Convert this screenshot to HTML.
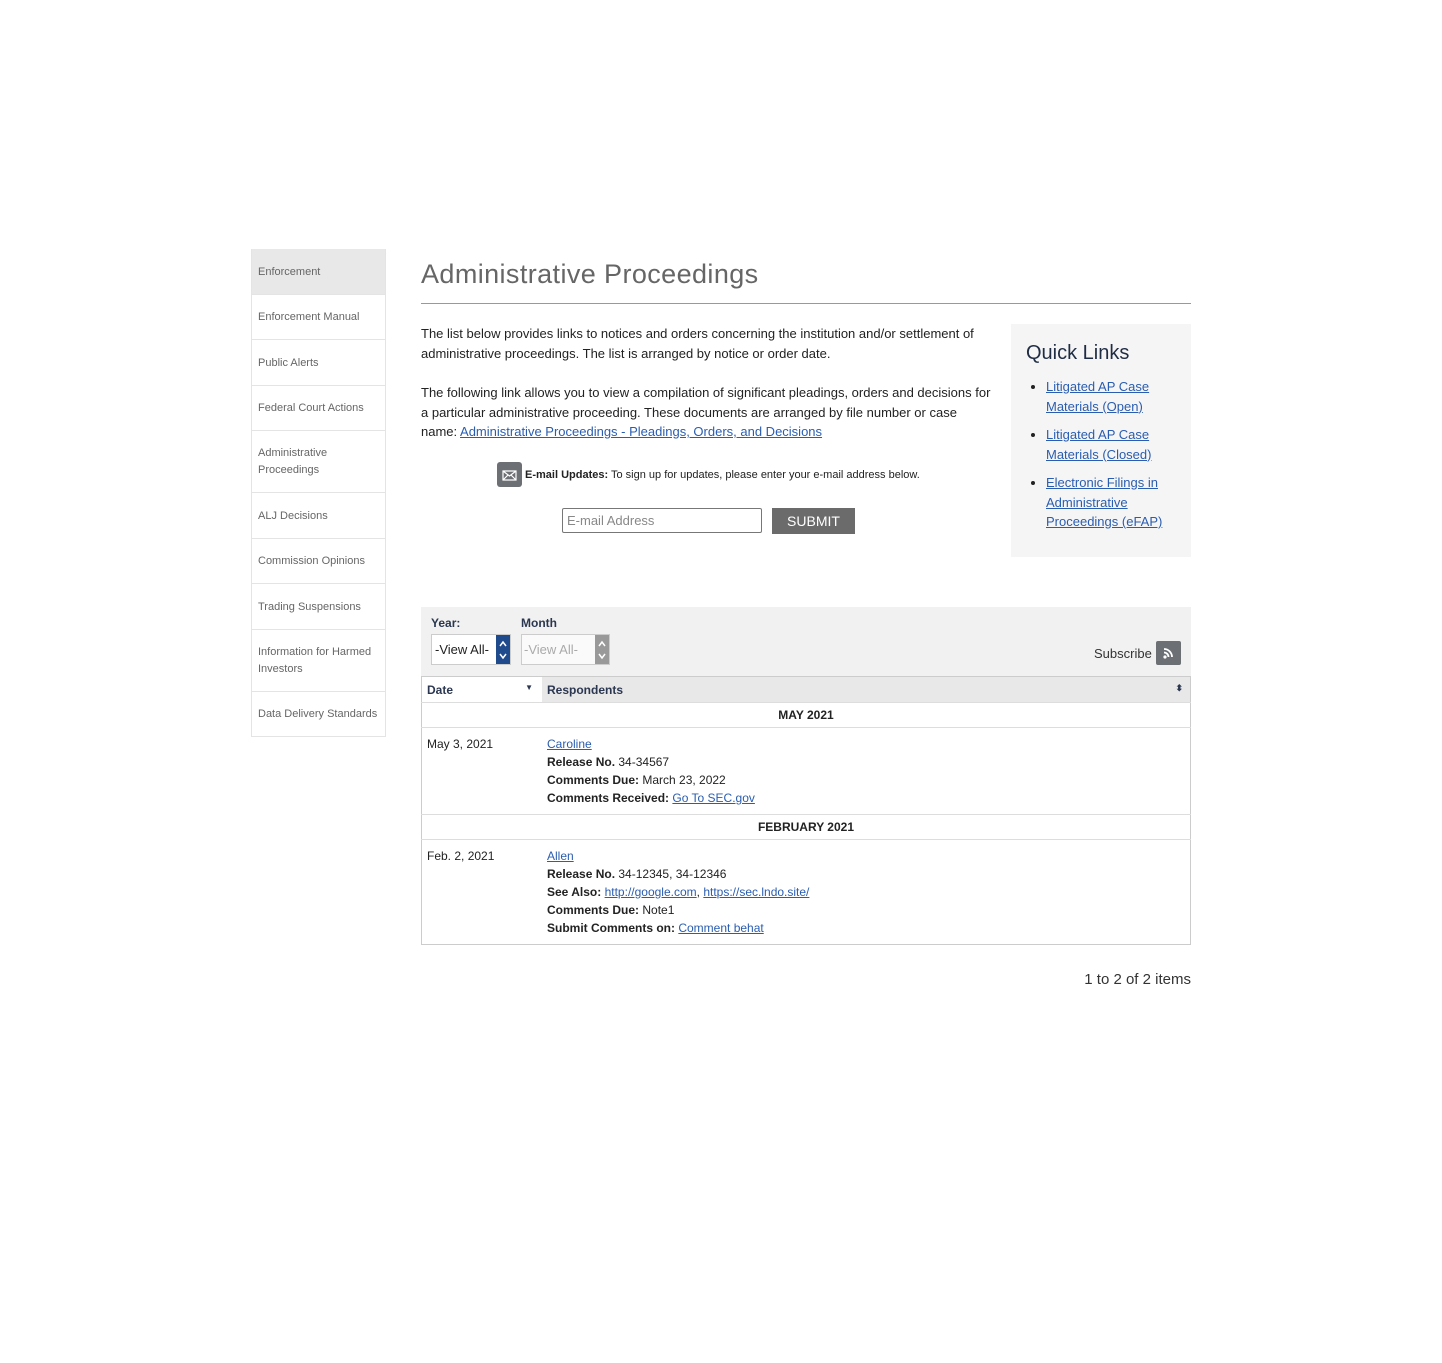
<!DOCTYPE html>
<html><head><style>
body{margin:0;background:#fff;font-family:"Liberation Sans",Arial,sans-serif;color:#222;}
.side{position:absolute;left:251px;top:249px;width:133px;border:1px solid #e4e4e4;border-top:none;}
.side div{font-size:11px;color:#666;padding:0 6px;border-top:1px solid #e4e4e4;display:flex;align-items:center;line-height:17px;box-sizing:border-box;padding-top:1px;}
.side div.act{background:#e8e8e8;border-top:none;}
a{color:#2a5db0;text-decoration:underline;}
h1{position:absolute;left:421px;top:259px;margin:0;font-size:27px;font-weight:normal;color:#666;letter-spacing:.4px;}
.hr{position:absolute;left:421px;top:303px;width:770px;border-top:1px solid #999;}
.intro{position:absolute;left:421px;top:324px;width:575px;font-size:13px;line-height:19.5px;}
.intro p{margin:0 0 20px;}
.ql{position:absolute;left:1011px;top:324px;width:180px;height:233px;background:#f5f5f5;}
.ql h2{margin:18px 0 0 15px;font-size:20px;font-weight:normal;color:#1f2d44;}
.ql ul{margin:12px 0 0;padding-left:35px;font-size:13px;line-height:19.5px;}
.ql li{margin-bottom:9px;}
.filt{position:absolute;left:421px;top:607px;width:770px;height:69px;background:#f1f1f1;}
.lab{position:absolute;font-size:12px;font-weight:bold;color:#2b3750;}
.sel{position:absolute;top:27px;height:31px;border:1px solid #ccc;background:#fff;font-size:13px;line-height:30px;box-sizing:border-box;}
.sel span{position:absolute;right:0;top:0;bottom:0;width:14px;}
table{position:absolute;left:421px;top:676px;width:770px;border-collapse:collapse;font-size:12px;border:1px solid #ccc;}
th{text-align:left;height:25px;padding:0 5px;color:#2b3750;font-size:12px;}
td{vertical-align:top;padding:7px 5px 7px;line-height:18px;}
.mo td{text-align:center;font-weight:bold;padding:0;height:24px;line-height:24px;border-top:1px solid #ddd;border-bottom:1px solid #ddd;}
</style></head><body>
<div class="side">
<div class="act" style="height:45px">Enforcement</div>
<div style="height:45px">Enforcement Manual</div>
<div style="height:46px">Public Alerts</div>
<div style="height:45px">Federal Court Actions</div>
<div style="height:62px">Administrative Proceedings</div>
<div style="height:46px">ALJ Decisions</div>
<div style="height:45px">Commission Opinions</div>
<div style="height:46px">Trading Suspensions</div>
<div style="height:62px">Information for Harmed Investors</div>
<div style="height:45px">Data Delivery Standards</div>
</div>
<h1>Administrative Proceedings</h1>
<div class="hr"></div>
<div class="intro">
<p>The list below provides links to notices and orders concerning the institution and/or settlement of administrative proceedings. The list is arranged by notice or order date.</p>
<p>The following link allows you to view a compilation of significant pleadings, orders and decisions for a particular administrative proceeding. These documents are arranged by file number or case name: <a href="#">Administrative Proceedings - Pleadings, Orders, and Decisions</a></p>
</div>
<div style="position:absolute;left:497px;top:462px;width:25px;height:25px;background:#6c6f73;border-radius:3px;"><svg width="25" height="25" viewBox="0 0 25 25"><path d="M6 9h13v9H6z M6 9l6.5 5L19 9 M6 18l5-5 M19 18l-5-5" fill="none" stroke="#fff" stroke-width="1.2"/></svg></div>
<div style="position:absolute;left:525px;top:469px;font-size:11px"><b>E-mail Updates:</b> To sign up for updates, please enter your e-mail address below.</div>
<div style="position:absolute;left:562px;top:508px;height:25px;width:200px;border:1px solid #777;border-radius:2px;font-size:13px;color:#888;line-height:24px;padding-left:4px;box-sizing:border-box">E-mail Address</div>
<div style="position:absolute;left:772px;top:508px;width:83px;height:26px;background:#6b6b6b;color:#fff;font-size:14px;text-align:center;line-height:26px">SUBMIT</div>
<div class="ql"><h2>Quick Links</h2><ul>
<li><a href="#">Litigated AP Case Materials (Open)</a></li>
<li><a href="#">Litigated AP Case Materials (Closed)</a></li>
<li><a href="#">Electronic Filings in Administrative Proceedings (eFAP)</a></li></ul></div>
<div class="filt">
<div class="lab" style="left:10px;top:9px">Year:</div>
<div class="lab" style="left:100px;top:9px">Month</div>
<div class="sel" style="left:10px;width:80px;padding-left:3px">-View All-<span style="background:#1f4a8c"><svg width="14" height="29"><path d="M4 11l3-4 3 4M4 19l3 4 3-4" fill="none" stroke="#fff" stroke-width="1.5"/></svg></span></div>
<div class="sel" style="left:100px;width:89px;padding-left:2px;color:#aaa;background:#fafafa">-View All-<span style="background:#999"><svg width="14" height="29"><path d="M4 11l3-4 3 4M4 19l3 4 3-4" fill="none" stroke="#fff" stroke-width="1.5"/></svg></span></div>
<div style="position:absolute;left:673px;top:39px;font-size:13px;color:#333">Subscribe</div>
<div style="position:absolute;left:735px;top:34px;width:25px;height:24px;background:#6c6f73;border-radius:2px;"><svg width="25" height="24"><circle cx="9" cy="16" r="1.6" fill="#fff"/><path d="M8 11.5a4.5 4.5 0 0 1 4.5 4.5M8 8a8 8 0 0 1 8 8" fill="none" stroke="#fff" stroke-width="1.8"/></svg></div>
</div>
<table>
<tr style="background:#e8e8e8"><th style="width:110px;background:#fff">Date <span style="float:right;font-size:8px;margin-right:4px">▼</span></th><th>Respondents <span style="float:right;font-size:9px;margin-right:2px">⬍</span></th></tr>
<tr class="mo"><td colspan="2">MAY 2021</td></tr>
<tr><td>May 3, 2021</td><td><a href="#">Caroline</a><br><b>Release No.</b> 34-34567<br><b>Comments Due:</b> March 23, 2022<br><b>Comments Received:</b> <a href="#">Go To SEC.gov</a></td></tr>
<tr class="mo"><td colspan="2">FEBRUARY 2021</td></tr>
<tr><td>Feb. 2, 2021</td><td><a href="#">Allen</a><br><b>Release No.</b> 34-12345, 34-12346<br><b>See Also:</b> <a href="#">http://google.com</a>, <a href="#">https://sec.lndo.site/</a><br><b>Comments Due:</b> Note1<br><b>Submit Comments on:</b> <a href="#">Comment behat</a></td></tr>
</table>
<div style="position:absolute;right:251px;top:971px;font-size:15px;color:#333">1 to 2 of 2 items</div>
</body></html>
